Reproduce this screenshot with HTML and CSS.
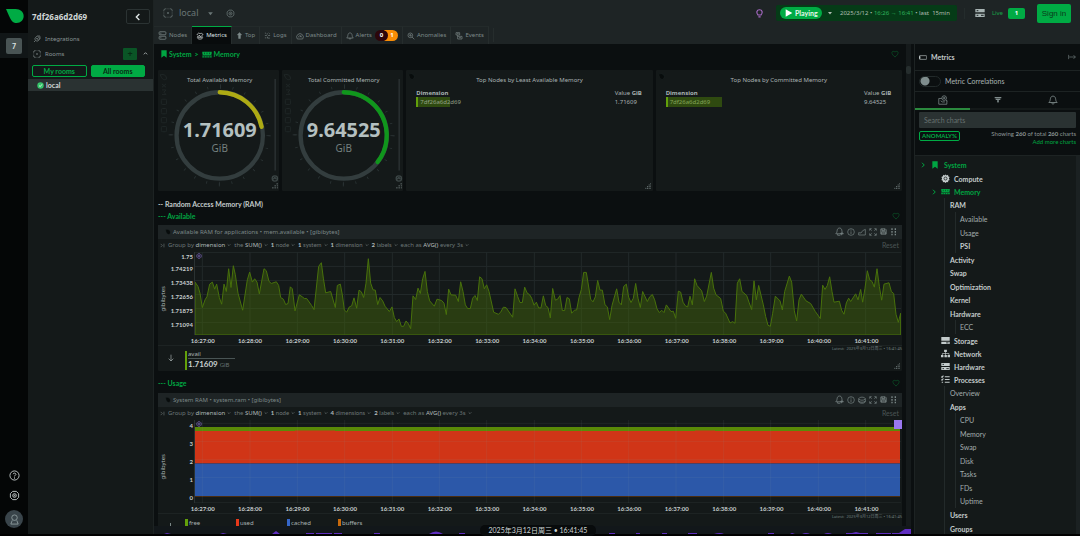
FILE: index.html
```html
<!DOCTYPE html>
<html lang="en">
<head>
<meta charset="utf-8">
<title>Metrics</title>
<link rel="stylesheet" href="styles.css">
</head>
<body>
<svg class="defs" aria-hidden="true">
  <symbol id="space" viewBox="0 0 24 24"><path d="M8 2H6a4 4 0 0 0-4 4v2M16 2h2a4 4 0 0 1 4 4v2M8 22H6a4 4 0 0 1-4-4v-2M16 22h2a4 4 0 0 0 4-4v-2M2 11v2M22 11v2M11 2h2M11 22h2"/><circle cx="12" cy="12" r="1.5"/></symbol>
  <symbol id="gear" viewBox="0 0 24 24"><path d="M8 3h8l5 5v8l-5 5H8l-5-5V8z"/><circle cx="12" cy="12" r="4"/><circle cx="12" cy="12" r="1"/></symbol>
  <symbol id="plug" viewBox="0 0 24 24"><path d="M8 7l5-4 8 8-4 5c-3 3-6 3-9 0S5 10 8 7zM8 16l-5 5M14 3l7 0M21 4v7M9 11h6v5"/></symbol>
  <symbol id="nodes" viewBox="0 0 24 24"><rect x="3" y="2" width="18" height="8" rx="2"/><rect x="3" y="14" width="18" height="8" rx="2"/><path d="M6 6h3M6 18h3"/></symbol>
  <symbol id="metrics" viewBox="0 0 24 24"><path d="M3 9c2-7 8-7 9-3 2-4 9-2 9 3M3 13h5l2-4 3 6 2-3h6M4 17c2 6 14 6 16 0z"/></symbol>
  <symbol id="top" viewBox="0 0 24 24"><path d="M12 2l7 8h-4v12H9V10H5z" fill="currentColor"/></symbol>
  <symbol id="logs" viewBox="0 0 24 24"><path d="M3 4h4M11 4v5M16 3l4 4M3 12h7M14 12h7M3 20h5M12 16v5h8"/></symbol>
  <symbol id="dash" viewBox="0 0 24 24"><path d="M4 21a10 10 0 1 1 16 0zM7 16c0-6 10-6 10 0M12 16l3-5"/></symbol>
  <symbol id="bell" viewBox="0 0 24 24"><path d="M2 18c4-3 3-7 4-10 1-7 11-7 12 0 1 3 0 7 4 10zM9 18c0 5 6 5 6 0"/></symbol>
  <symbol id="bellplus" viewBox="0 0 24 24"><path d="M2 18c4-3 3-7 4-10 1-7 11-7 12 0 1 3 0 7 4 10zM7 18v4h7M17 14v8M13 18h9"/></symbol>
  <symbol id="anomaly" viewBox="0 0 24 24"><circle cx="10" cy="10" r="7"/><path d="M15 15l7 7M6 10h2l2-3 1 6 2-3h1"/></symbol>
  <symbol id="events" viewBox="0 0 24 24"><path d="M3 2h11v7H3zM8 9v12h13v-8H8M12 17h6M6 5h5"/></symbol>
  <symbol id="bookmark" viewBox="0 0 24 24"><path d="M4 1h16v22l-8-6-8 6z" fill="currentColor" stroke="none"/></symbol>
  <symbol id="memory" viewBox="0 0 36 24"><path d="M1 2h34v6l-2 3 2 3v2H1v-2l2-3-2-3zM1 18h34v5H1z" fill="currentColor" stroke="none"/><path d="M9 5v6M18 5v6M27 5v6M9 18v6M18 18v6M27 18v6" stroke="#0d1a13" stroke-width="2"/></symbol>
  <symbol id="heart" viewBox="0 0 24 24"><path d="M12 21C-4 9 4 0 12 6c8-6 16 3 0 15z"/></symbol>
  <symbol id="bulb" viewBox="0 0 24 24"><path d="M8 16C2 10 5 2 12 2s10 8 4 14zM9 21h6" stroke-width="3"/></symbol>
  <symbol id="caret" viewBox="0 0 24 24"><path d="M4 8h16l-8 10z" fill="currentColor" stroke="none"/></symbol>
  <symbol id="chev" viewBox="0 0 24 24"><path d="M4 8l8 8 8-8" stroke-width="4"/></symbol>
  <symbol id="chevr" viewBox="0 0 24 24"><path d="M8 3l9 9-9 9" stroke-width="4"/></symbol>
  <symbol id="chevl" viewBox="0 0 24 24"><path d="M16 3l-9 9 9 9" stroke-width="4"/></symbol>
  <symbol id="server" viewBox="0 0 30 26"><path d="M1 1h28v10H1zM1 15h28v10H1z" fill="currentColor" stroke="none"/><path d="M5 6h5M5 20h5M18 20h8" stroke="#1e2526" stroke-width="3"/></symbol>
  <symbol id="disk" viewBox="0 0 30 26"><path d="M1 1h28v13H1zM1 17h28v8H1z" fill="currentColor" stroke="none"/><path d="M17 21h8" stroke="#1e2526" stroke-width="3"/></symbol>
  <symbol id="info" viewBox="0 0 24 24"><circle cx="12" cy="12" r="10"/><path d="M12 10v8M12 5v3"/></symbol>
  <symbol id="area" viewBox="0 0 24 24"><path d="M2 21v-7l7 1 5-7 8-4v17z"/></symbol>
  <symbol id="stack" viewBox="0 0 24 24"><path d="M2 8c3-6 17-6 20 0v10c-3 5-17 5-20 0zM2 9c6 5 14 5 20 0M2 15c6 5 14 5 20 0"/></symbol>
  <symbol id="expand" viewBox="0 0 24 24"><path d="M2 8V2h6M16 2h6v6M22 16v6h-6M8 22H2v-6M3 3l5 5M21 3l-5 5M21 21l-5-5M3 21l5-5"/></symbol>
  <symbol id="save" viewBox="0 0 24 24"><path d="M3 3h15l3 3v15H3zM7 3v6h9V3M6 21v-8h12v8M9 17h6" stroke-width="3"/></symbol>
  <symbol id="drag" viewBox="0 0 24 24"><path d="M6 1v5M16 1v5M6 9v5M16 9v5M6 17v5M16 17v5" stroke-width="4"/></symbol>
  <symbol id="grip" viewBox="0 0 18 18"><path d="M1 16h3M6 16h3M11 16h3M16 16h2M6 11h3M11 11h3M16 11h2M11 6h3M16 6h2M16 1h2" stroke-width="3"/></symbol>
  <symbol id="drop" viewBox="0 0 24 24"><path d="M3 3c12-3 18 3 18 10s-4 8-8 8C6 20 4 12 3 3z" fill="#080c0c" stroke="#283031"/></symbol>
  <symbol id="down" viewBox="0 0 24 24"><path d="M12 2v19M5 14l7 7 7-7"/></symbol>
  <symbol id="group" viewBox="0 0 24 24"><path d="M3 4l8 8-8 8M19 3v18" stroke-width="3"/></symbol>
  <symbol id="chip" viewBox="0 0 24 24"><path d="M6 2l3 2 3-3 3 3 4-2 0 4 4 2-2 4 2 4-4 2v4l-4-1-3 3-3-3-4 1v-4l-4-2 2-4-2-4 4-2z" fill="currentColor" stroke="none"/><circle cx="12" cy="12" r="4" stroke="#14191a"/></symbol>
  <symbol id="network" viewBox="0 0 26 24"><path d="M9 1h8v7H9zM0 16h7v7H0zM10 16h7v7h-7zM19 16h7v7h-7z" fill="currentColor" stroke="none"/><path d="M13 8v8M4 16v-4h19v4"/></symbol>
  <symbol id="tasks" viewBox="0 0 26 24"><path d="M1 4l2 2 4-5M1 12l2 2 4-5M11 4h14M11 12h14M11 20h14M2 20h4" stroke-width="3"/></symbol>
  <symbol id="folder" viewBox="0 0 26 26"><path d="M2 9v15h21V14M2 9h8M7 15l4 3h7"/><circle cx="16" cy="8" r="6"/><path d="M16 5v6M13 8h6M21 13l3 3"/></symbol>
  <symbol id="filter" viewBox="0 0 24 24"><path d="M2 5h20M5 10h14M9 15h6M11 19h2" stroke-width="4"/></symbol>
  <symbol id="out" viewBox="0 0 26 24"><path d="M2 5v14M4 12h20M18 6l6 6-6 6"/></symbol>
  <symbol id="panel" viewBox="0 0 26 16"><rect x="1" y="2" width="24" height="12" rx="2"/><path d="M2 4v8" stroke-width="5"/></symbol>
</svg>

<div class="app">
  <nav class="rail">
    <svg class="logo" viewBox="0 0 54 42"><path d="M0 0h29c14 0 24 9 24 21s-9 21-21 21h-4C15 42 8 16 0 0z" fill="#00ab44"/></svg>
    <div class="rail-space"><button class="space-tile">7</button></div>
    <div class="rail-foot">
      <svg class="ic i11" viewBox="0 0 24 24"><circle cx="12" cy="12" r="10"/><path d="M9 9c1-4 7-2 6 1-1 2-3 2-3 4M12 16v3"/></svg>
      <svg class="ic i11"><use href="#gear"/></svg>
      <span class="user"><svg class="ic i11" viewBox="0 0 24 24"><circle cx="12" cy="8" r="6"/><path d="M7 14l-3 8h16l-3-8"/></svg></span>
    </div>
  </nav>

  <aside class="rooms">
    <div class="rooms-head"><h1>7df26a6d2d69</h1><button class="collapse" aria-label="Collapse"><svg class="ic i8"><use href="#chevl"/></svg></button></div>
    <a class="rooms-link" href="#"><svg class="ic i8"><use href="#plug"/></svg>Integrations</a>
    <div class="rooms-link rooms-row"><svg class="ic i8"><use href="#space"/></svg><span>Rooms</span><button class="add" aria-label="Add room">+</button><svg class="ic i5 up"><use href="#chev"/></svg></div>
    <div class="room-tabs"><button>My rooms</button><button class="on">All rooms</button></div>
    <a class="room" href="#"><svg class="i7" viewBox="0 0 24 24"><circle cx="12" cy="12" r="11" fill="#35c46a"/><path d="M7 12l4 4 6-8" fill="none" stroke="#e6f5ea" stroke-width="3"/></svg>local</a>
  </aside>

  <div class="main">
    <header class="topbar">
      <svg class="ic i10"><use href="#space"/></svg><span class="crumb">local</span><svg class="ic i7"><use href="#caret"/></svg><svg class="ic i9 top-gear"><use href="#gear"/></svg>
      <svg class="ic i9 bulb"><use href="#bulb"/></svg>
      <div class="play">
        <button class="pill"><svg class="i8" viewBox="0 0 24 24"><path d="M2 1l20 11L2 23z" fill="#fff"/></svg>Playing</button>
        <svg class="ic i6"><use href="#caret"/></svg>
        <span class="range">2025/3/12 • <b>16:26</b> <b>→</b> <b>16:41</b> • last &nbsp;15min</span>
      </div>
      <div class="live"><svg class="ic srv"><use href="#server"/></svg><span>Live</span><b class="count">1</b></div>
      <button class="signin">Sign in</button>
    </header>
    <nav class="tabs">
      <a href="#"><svg class="ic i9"><use href="#nodes"/></svg>Nodes</a>
      <a href="#" class="on"><svg class="ic i8"><use href="#metrics"/></svg>Metrics</a>
      <a href="#"><svg class="ic i7"><use href="#top"/></svg>Top</a>
      <a href="#"><svg class="ic i7"><use href="#logs"/></svg>Logs</a>
      <a href="#"><svg class="ic i8"><use href="#dash"/></svg>Dashboard</a>
      <a href="#"><svg class="ic i8"><use href="#bell"/></svg>Alerts<span class="alerts"><b>0</b><b>1</b></span></a>
      <a href="#"><svg class="ic i8"><use href="#anomaly"/></svg>Anomalies</a>
      <a href="#"><svg class="ic i8"><use href="#events"/></svg>Events</a>
      <i class="tab-end"></i>
    </nav>

    <div class="work">
      <main class="content">
        <div class="scroll">
          <div class="path"><svg class="ic i8"><use href="#bookmark"/></svg><b>System</b><b>&gt;</b><svg class="ic mem"><use href="#memory"/></svg><b>Memory</b><svg class="ic i8 fav"><use href="#heart"/></svg></div>

          <section class="cards">
            <article class="card gauge">
              <svg viewBox="0 0 365 363" role="img" aria-label="Total Available Memory">
                <text class="g-title" x="186" y="36">Total Available Memory</text>
                <g class="wm"><path d="M7 14c12-2 20 3 18 14-8 4-15-2-18-14z"/><path d="M12 42l12 10M24 42L12 52M12 60h12l-6 7 6 7H12"/><rect x="10" y="88" width="16" height="16" rx="4"/><rect x="10" y="116" width="16" height="16" rx="4"/><rect x="10" y="143" width="16" height="16" rx="4"/><rect x="10" y="170" width="16" height="16" rx="4"/></g>
                <circle class="ticks" cx="186" cy="197" r="147" pathLength="24"/><circle class="major" cx="186" cy="197" r="147" pathLength="4"/>
                <circle class="ring" cx="186" cy="197" r="130"/><path class="arc" stroke="#aeab14" d="M186 67A130 130 0 0 1 312 171"/>
                <text class="g-num" x="186" y="201">1.71609</text><text class="g-unit" x="186" y="247">GiB</text>
                <path class="side" d="M353 27v276"/><circle cx="352" cy="327" r="8" class="knob"/><path class="knob" d="M347 329l5-5 5 5"/>
                <path class="dots" d="M344 355h17M351 349h10M357 343h4"/>
              </svg>
            </article>
            <article class="card gauge">
              <svg viewBox="0 0 365 363" role="img" aria-label="Total Committed Memory">
                <text class="g-title" x="186" y="36">Total Committed Memory</text>
                <g class="wm"><path d="M7 14c12-2 20 3 18 14-8 4-15-2-18-14z"/><path d="M12 42l12 10M24 42L12 52M12 60h12l-6 7 6 7H12"/><rect x="10" y="88" width="16" height="16" rx="4"/><rect x="10" y="116" width="16" height="16" rx="4"/><rect x="10" y="143" width="16" height="16" rx="4"/><rect x="10" y="170" width="16" height="16" rx="4"/></g>
                <circle class="ticks" cx="186" cy="197" r="147" pathLength="24"/><circle class="major" cx="186" cy="197" r="147" pathLength="4"/>
                <circle class="ring" cx="186" cy="197" r="130"/><path class="arc" stroke="#10961c" d="M186 67A130 130 0 0 1 288 277"/>
                <text class="g-num" x="186" y="201">9.64525</text><text class="g-unit" x="186" y="247">GiB</text>
                <path class="side" d="M353 27v276"/><circle cx="352" cy="327" r="8" class="knob"/><path class="knob" d="M347 329l5-5 5 5"/>
                <path class="dots" d="M344 355h17M351 349h10M357 343h4"/>
              </svg>
            </article>
            <article class="card topn">
              <svg class="i7 mark"><use href="#drop"/></svg>
              <h2>Top Nodes by Least Available Memory</h2>
              <table><thead><tr><th>Dimension</th><th class="val"><span>Value</span> GiB</th></tr></thead>
              <tbody><tr><td><span class="bar short">7df26a6d2d69</span></td><td class="val">1.71609</td></tr></tbody></table>
              <svg class="ic i6 grip"><use href="#grip"/></svg>
            </article>
            <article class="card topn">
              <svg class="i7 mark"><use href="#drop"/></svg>
              <h2>Top Nodes by Committed Memory</h2>
              <table><thead><tr><th>Dimension</th><th class="val"><span>Value</span> GiB</th></tr></thead>
              <tbody><tr><td><span class="bar">7df26a6d2d69</span></td><td class="val">9.64525</td></tr></tbody></table>
              <svg class="ic i6 grip"><use href="#grip"/></svg>
            </article>
          </section>

          <h2 class="sec">-- Random Access Memory (RAM)</h2>
          <h3 class="sub">--- Available<svg class="ic i8 fav"><use href="#heart"/></svg></h3>

          <article class="card chart">
            <header class="c-head"><svg class="i6"><use href="#drop"/></svg><span>Available RAM for applications • mem.available • [gibibytes]</span>
              <span class="c-tools"><svg class="ic i9"><use href="#bellplus"/></svg><svg class="ic i8"><use href="#info"/></svg><svg class="ic i8"><use href="#area"/></svg><svg class="ic i8"><use href="#expand"/></svg><svg class="ic i7"><use href="#save"/></svg><svg class="ic i8"><use href="#drag"/></svg></span></header>
            <div class="c-bar"><svg class="ic i5"><use href="#group"/></svg><span class="q">Group by <b>dimension</b><svg class="ic i4"><use href="#chev"/></svg></span><span class="q">the <b>SUM()</b><svg class="ic i4"><use href="#chev"/></svg></span><span class="q s"><b>1</b> node<svg class="ic i4"><use href="#chev"/></svg></span><span class="q s"><b>1</b> system<svg class="ic i4"><use href="#chev"/></svg></span><span class="q s"><b>1</b> dimension<svg class="ic i4"><use href="#chev"/></svg></span><span class="q s"><b>2</b> labels<svg class="ic i4"><use href="#chev"/></svg></span><span class="q">each as <b>AVG()</b> every 3s<svg class="ic i4"><use href="#chev"/></svg></span><button class="reset">Reset</button></div>
            <div class="c-plot">
              <div class="unit"><span>gibibytes</span></div>
              <div class="yax six"><span>1.75</span><span>1.74219</span><span>1.73438</span><span>1.72656</span><span>1.71875</span><span>1.71094</span></div>
              <div class="plot">
                <svg class="series" viewBox="0 0 2118 248" preserveAspectRatio="none">
                  <path class="grid" d="M0 1H2118M0 43H2118M0 85H2118M0 127H2118M0 169H2118M0 211H2118M22 0V248M165 0V248M307 0V248M449 0V248M592 0V248M733 0V248M875 0V248M1018 0V248M1159 0V248M1301 0V248M1443 0V248M1586 0V248M1727 0V248M1870 0V248M2012 0V248"/>
                  <path class="avail" d="M0 248V90L9 103 15 123 22 166 30 143 36 133 44 96 52 90 59 111 65 96 73 136 80 156 87 96 94 118 101 50 108 106 115 41 121 68 129 123 143 174 157 83 164 60 172 90 179 80 186 90 193 125 207 50 214 56 222 88 229 94 244 89 251 100 257 136 265 141 272 157 279 154 286 104 292 110 300 176 313 128 322 134 328 139 335 139 350 160 357 172 371 43 379 32 385 78 392 122 407 118 421 166 427 100 436 96 442 128 448 173 455 180 463 164 470 161 477 137 485 168 492 114 499 119 506 136 513 93 520 20 527 93 534 113 541 114 548 157 555 136 563 146 570 162 583 178 591 164 598 196 605 208 612 200 619 222 626 222 633 206 640 214 647 229 654 131 662 142 669 108 676 124 683 80 690 58 697 118 704 146 718 162 726 141 740 145 747 153 754 187 761 111 768 128 782 129 790 148 797 89 804 118 811 158 818 169 826 169 833 138 840 130 847 145 854 74 861 80 868 110 875 98 882 118 896 180 910 186 917 180 925 165 933 166 953 195 960 110 968 133 975 151 982 151 989 105 996 122 1004 128 1010 138 1017 159 1024 150 1031 167 1038 167 1045 131 1052 160 1059 166 1066 197 1073 109 1081 144 1088 141 1095 130 1102 175 1109 175 1116 136 1123 140 1130 183 1138 174 1145 173 1152 136 1159 112 1166 61 1174 61 1187 141 1194 149 1201 134 1208 85 1215 114 1222 114 1230 158 1237 164 1244 202 1251 160 1265 110 1272 150 1279 158 1286 103 1294 96 1301 135 1308 151 1315 138 1322 94 1329 138 1336 166 1343 118 1357 148 1364 134 1372 127 1379 143 1386 170 1393 181 1400 174 1407 181 1414 158 1428 178 1435 177 1442 198 1450 117 1457 120 1464 150 1471 161 1478 164 1485 132 1492 158 1499 80 1506 100 1520 116 1528 148 1535 132 1549 61 1556 108 1563 128 1577 139 1585 177 1592 183 1605 212 1613 208 1620 213 1627 93 1634 80 1641 118 1655 130 1662 150 1670 172 1677 86 1684 143 1691 100 1705 158 1712 193 1719 219 1726 222 1733 183 1741 132 1755 146 1762 173 1769 118 1783 72 1790 90 1798 176 1805 206 1812 143 1819 126 1833 146 1847 154 1861 178 1876 199 1883 99 1890 112 1897 100 1904 74 1911 118 1917 150 1933 147 1940 174 1947 186 1954 152 1961 138 1967 148 1982 125 1989 143 1997 112 2003 150 2010 108 2017 56 2024 83 2031 88 2038 105 2046 50 2053 103 2060 144 2067 96 2082 92 2089 118 2096 124 2103 186 2110 210 2117 183V248z"/>
                </svg>
                <svg class="ic i6 ai"><use href="#gear"/></svg>
                <div class="xax"><span>16:27:00</span><span>16:28:00</span><span>16:29:00</span><span>16:30:00</span><span>16:31:00</span><span>16:32:00</span><span>16:33:00</span><span>16:34:00</span><span>16:35:00</span><span>16:36:00</span><span>16:37:00</span><span>16:38:00</span><span>16:39:00</span><span>16:40:00</span><span>16:41:00</span></div>
              </div>
            </div>
            <div class="latest">Latest: &nbsp;2025年3月12日周三 • 16:41:45</div>
            <div class="c-foot"><svg class="ic i8"><use href="#down"/></svg><div class="dim"><span>avail</span><strong>1.71609 <small>GiB</small></strong></div><svg class="ic i6 grip"><use href="#grip"/></svg></div>
          </article>

          <h3 class="sub usage">--- Usage<svg class="ic i8 fav"><use href="#heart"/></svg></h3>

          <article class="card chart">
            <header class="c-head"><svg class="i6"><use href="#drop"/></svg><span>System RAM • system.ram • [gibibytes]</span>
              <span class="c-tools"><svg class="ic i9"><use href="#bellplus"/></svg><svg class="ic i8"><use href="#info"/></svg><svg class="ic i8"><use href="#stack"/></svg><svg class="ic i8"><use href="#expand"/></svg><svg class="ic i7"><use href="#save"/></svg><svg class="ic i8"><use href="#drag"/></svg></span></header>
            <div class="c-bar"><svg class="ic i5"><use href="#group"/></svg><span class="q">Group by <b>dimension</b><svg class="ic i4"><use href="#chev"/></svg></span><span class="q">the <b>SUM()</b><svg class="ic i4"><use href="#chev"/></svg></span><span class="q s"><b>1</b> node<svg class="ic i4"><use href="#chev"/></svg></span><span class="q s"><b>1</b> system<svg class="ic i4"><use href="#chev"/></svg></span><span class="q s"><b>4</b> dimensions<svg class="ic i4"><use href="#chev"/></svg></span><span class="q s"><b>2</b> labels<svg class="ic i4"><use href="#chev"/></svg></span><span class="q">each as <b>AVG()</b> every 3s<svg class="ic i4"><use href="#chev"/></svg></span><button class="reset">Reset</button></div>
            <div class="c-plot">
              <div class="unit"><span>gibibytes</span></div>
              <div class="yax five"><span>4</span><span>3</span><span>2</span><span>1</span><span>0</span></div>
              <div class="plot">
                <svg class="series" viewBox="0 0 2118 248" preserveAspectRatio="none">
                  <path d="M0 21H2115V34H0z" fill="#5a8a08"/><path d="M0 33H300V31H420V33H900V32H1100V33H1500V31H1560V33H2115V130H0z" fill="#d03517"/><path d="M0 130H2115V227H0z" fill="#2c58a9"/><path d="M0 227H2115V230H0z" fill="#4a2c10"/>
                  <path class="grid soft" d="M0 10H2118M0 64H2118M0 118H2118M0 172H2118M0 247H2118M22 0V248M165 0V248M307 0V248M449 0V248M592 0V248M733 0V248M875 0V248M1018 0V248M1159 0V248M1301 0V248M1443 0V248M1586 0V248M1727 0V248M1870 0V248M2012 0V248"/>
                </svg>
                <svg class="ic i6 ai"><use href="#gear"/></svg><i class="flag"></i>
                <div class="xax"><span>16:27:00</span><span>16:28:00</span><span>16:29:00</span><span>16:30:00</span><span>16:31:00</span><span>16:32:00</span><span>16:33:00</span><span>16:34:00</span><span>16:35:00</span><span>16:36:00</span><span>16:37:00</span><span>16:38:00</span><span>16:39:00</span><span>16:40:00</span><span>16:41:00</span></div>
              </div>
            </div>
            <div class="latest">Latest: &nbsp;2025年3月12日周三 • 16:41:45</div>
            <div class="legend"><i class="tick"></i><span class="free">free</span><span class="used">used</span><span class="cached">cached</span><span class="buffers">buffers</span></div>
          </article>
        </div>
        <div class="track"><i></i></div>
        <div class="strip">
          <svg viewBox="0 0 757 8" preserveAspectRatio="none"><path fill="#5f2ec0" d="M10 8l3-1 4 1zM66 8l3-1 4 1zM118 8l4-3 4 3zM152 8v-1h8v1zM162 8v-1h16v1zM180 8v-1h8v1zM220 8v-1h6v1zM275 8q7-5 14 0zM305 8v-1h6v1zM435 8v-1h5v1zM455 8v-1h6v1zM482 8v-1h4v1zM508 8v-1h5v1zM534 8v-1h9v1zM560 8q6-2 10 0zM614 8v-1h6v1zM636 8l2-1 3 1zM648 8q4-2 8 0zM670 8q4-2 8 0zM692 8v-1h6l4-1 4 1h8v1zM722 8v-1h15v1zM738 8v-1h7l6-4h6v5z"/></svg>
          <time>2025年3月12日周三 • 16:41:45</time>
        </div>
      </main>

      <aside class="panel">
        <div class="p-head"><svg class="ic pan"><use href="#panel"/></svg><b>Metrics</b><svg class="ic i8 end"><use href="#out"/></svg></div>
        <label class="p-corr"><input type="checkbox"><span>Metric Correlations</span></label>
        <div class="p-tabs"><button class="on" aria-label="Charts"><svg class="ic i10"><use href="#folder"/></svg></button><button aria-label="Filters"><svg class="ic i8"><use href="#filter"/></svg></button><button aria-label="Alerts"><svg class="ic i10"><use href="#bell"/></svg></button></div>
        <div class="p-search"><input type="text" placeholder="Search charts" aria-label="Search charts">
          <div class="p-info"><button>ANOMALY%</button><div><p>Showing <b>260</b> of total <b>260</b> charts</p><a href="#">Add more charts</a></div></div></div>
        <div class="tree">
          <a href="#" class="l0 green"><svg class="ic i6"><use href="#chevr"/></svg><svg class="ic i8"><use href="#bookmark"/></svg>System</a>
          <a href="#" class="l1"><svg class="ic i9"><use href="#chip"/></svg>Compute</a>
          <a href="#" class="l1 green open"><svg class="ic i6"><use href="#chevr"/></svg><svg class="ic i9"><use href="#memory"/></svg>Memory</a>
          <div class="kids"><a href="#">RAM</a>
            <div class="kids"><a href="#" class="leaf">Available</a><a href="#" class="leaf">Usage</a><a href="#">PSI</a></div>
            <a href="#">Activity</a><a href="#">Swap</a><a href="#">Optimization</a><a href="#">Kernel</a><a href="#">Hardware</a>
            <div class="kids"><a href="#" class="leaf">ECC</a></div></div>
          <a href="#" class="l1"><svg class="ic i9"><use href="#disk"/></svg>Storage</a>
          <a href="#" class="l1"><svg class="ic i9"><use href="#network"/></svg>Network</a>
          <a href="#" class="l1"><svg class="ic i9"><use href="#server"/></svg>Hardware</a>
          <a href="#" class="l1"><svg class="ic i9"><use href="#tasks"/></svg>Processes</a>
          <div class="kids"><a href="#" class="leaf">Overview</a><a href="#">Apps</a>
            <div class="kids"><a href="#" class="leaf">CPU</a><a href="#" class="leaf">Memory</a><a href="#" class="leaf">Swap</a><a href="#" class="leaf">Disk</a><a href="#" class="leaf">Tasks</a><a href="#" class="leaf">FDs</a><a href="#" class="leaf">Uptime</a></div>
            <a href="#">Users</a><a href="#">Groups</a></div>
        </div>
      </aside>
    </div>
  </div>
</div>
</body>
</html>
```
FILE: styles.css
```css
* { box-sizing: border-box; margin: 0; }
body { background: #000; color: #a9b3b3; font: 7px/10px Lato, "Noto Sans", "Noto Sans CJK SC", sans-serif; }
a { color: inherit; text-decoration: none; }
button { font: inherit; color: inherit; background: none; border: 0; padding: 0; }
.defs { position: absolute; width: 0; height: 0; }
.ic { fill: none; stroke: currentColor; stroke-width: 2; flex: none; }
.i4 { width: 4px; height: 4px; }
.i5 { width: 5px; height: 5px; }
.i6 { width: 6px; height: 6px; }
.i7 { width: 7px; height: 7px; flex: none; }
.i8 { width: 8px; height: 8px; }
.i9 { width: 9px; height: 9px; }
.i10 { width: 10px; height: 10px; }
.i11 { width: 11px; height: 11px; }

.app { display: grid; grid-template-columns: 28px 126px minmax(0, 1fr); height: 100vh; padding-bottom: 2px; overflow: hidden; }

.rail { background: #040606; display: flex; flex-direction: column; align-items: center; padding-top: 9px; }
.logo { width: 18px; height: 14px; margin-left: 1px; }
.rail-space { width: 100%; height: 25px; margin-top: 10px; background: #111617; display: grid; place-items: center; }
.space-tile { width: 16px; height: 16px; background: #495454; border-radius: 2px; color: #dfe5e5; font-weight: 700; }
.rail-foot { margin-top: auto; display: flex; flex-direction: column; align-items: center; gap: 9px; color: #c3caca; padding-bottom: 6px; }
.user { width: 18px; height: 18px; border-radius: 9px; background: #39444a; display: grid; place-items: center; color: #8c9a9c; }

.rooms { background: #141919; border-right: 1px solid #1d2323; }
.rooms-head { display: flex; justify-content: space-between; align-items: center; padding: 9px 3px 8px 4px; }
.rooms h1 { font: 700 8px/14px "Noto Sans", sans-serif; color: #cfd6d6; }
.collapse { width: 24px; height: 15px; border: 1px solid #2b3333; border-radius: 2px; color: #e2e8e8; display: grid; place-items: center; }
.rooms-link { display: flex; align-items: center; gap: 4px; height: 13px; padding: 0 5px; color: #8b9696; font: 6px/10px "Noto Sans", sans-serif; }
.rooms-row { margin: 2px 0 3px; }
.add { margin-left: auto; margin-right: 2px; width: 14px; height: 12px; background: #0a5526; color: #062c14; border-radius: 1px; font-weight: 700; font-size: 9px; }
.up { transform: rotate(180deg); color: #b4bebe; }
.room-tabs { display: grid; grid-template-columns: 1fr 1fr; gap: 4px; padding: 2px 8px 2px 4px; }
.room-tabs button { height: 12px; border: 1px solid #00ab44; border-radius: 2px; color: #00ab44; font-weight: 700; line-height: 10px; }
.room-tabs .on { background: #00ab44; color: #0a2a15; }
.room { display: flex; align-items: center; gap: 2px; height: 12px; padding-left: 9px; background: #2a3232; color: #d5dbdb; font-weight: 700; }

.main { display: flex; flex-direction: column; min-width: 0; min-height: 0; background: #0b0f10; }
.topbar { display: flex; align-items: center; height: 26px; background: #1e2425; color: #6a7676; padding: 0 9px 0 9px; }
.crumb { font: 9px/12px "Noto Sans", sans-serif; margin: 0 9px 0 6px; }
.top-gear { margin-left: 12px; }
.bulb { margin-left: auto; color: #a96bc7; }
.play { display: flex; align-items: center; height: 16px; margin-left: 12px; padding: 0 7px 0 4px; background: #053b17; border-radius: 2px; color: #b0bcb3; }
.pill { display: flex; align-items: center; gap: 2px; width: 42px; height: 12px; padding-left: 5px; background: #00ab44; border-radius: 6px; color: #e8f7ec; font-weight: 700; }
.play .i6 { margin: 0 7px 0 5px; }
.range { font: 6px/10px "Noto Sans", sans-serif; }
.range b { font-weight: 400; color: #2fb35c; }
.live { display: flex; align-items: center; margin-left: 7px; padding-left: 10px; border-left: 1px solid #242c2c; color: #17a548; font: 6px/11px "Noto Sans", sans-serif; }
.srv { width: 10px; height: 10px; margin-right: 7px; color: #a7b3b3; }
.count { width: 17px; height: 11px; margin-left: 5px; background: #00ab44; border-radius: 2px; color: #fff; text-align: center; }
.signin { width: 34px; height: 19px; margin-left: 12px; background: #00ab44; border-radius: 2px; color: #0b3a1b; font: 8px/19px "Liberation Sans", sans-serif; }

.tabs { display: flex; height: 18px; background: #1e2425; color: #7d8989; font: 6px/17px "Noto Sans", sans-serif; }
.tabs a { display: flex; align-items: center; gap: 2px; padding: 0 4px; border-top: 1px solid #232a2a; border-right: 1px solid #262d2d; }
.tabs .on { background: #080b0c; border-top-color: #00ab44; color: #dfe5e5; }
.tab-end { width: 5px; height: 14px; margin-top: 2px; border-right: 1px solid #262d2d; }
.alerts { display: flex; line-height: 11px; margin-left: 1px; }
.alerts b { width: 13px; height: 11px; border-radius: 6px; background: #2c060b; color: #fff; text-align: center; z-index: 1; }
.alerts b + b { width: 14px; margin-left: -4px; padding-left: 2px; border-radius: 0 6px 6px 0; background: #f98d06; z-index: 0; }

.work { flex: 1; min-height: 0; display: grid; grid-template-columns: minmax(0, 1fr) 166px; }
.content { display: grid; grid-template-columns: minmax(0, 1fr) 5px; grid-template-rows: minmax(0, 1fr) 8px; padding-right: 3px; min-height: 0; }
.scroll { overflow: hidden; padding: 0 4px; }
.track { background: #151a1b; padding-top: 22px; }
.track i { display: block; height: 8px; border-radius: 2px; background: #262e2e; }
.path { display: flex; align-items: center; gap: 1px; height: 20px; margin-bottom: 6px; padding: 0 3px 0 2px; color: #00a542; }
.path b:nth-of-type(2) { margin: 0 2px; }
.mem { width: 10px; height: 7px; margin-right: 1px; }
.fav { margin-left: auto; color: #0b5c2a; }

.cards { display: grid; grid-template-columns: 61fr 61fr 124fr 124fr; gap: 3px; }
.card { background: #141919; border-radius: 1px; position: relative; }
.gauge svg { display: block; width: 100%; }
.gauge text { text-anchor: middle; }
.g-title { font: 18px "Noto Sans", sans-serif; fill: #aab4b4; }
.g-num { font: 700 60px "Noto Sans", sans-serif; fill: #b4c0c0; }
.g-unit { font: 30px "Noto Sans", sans-serif; fill: #74807f; }
.ring { fill: none; stroke: #333d3e; stroke-width: 13; }
.arc { fill: none; stroke-width: 13; stroke-linecap: round; }
.ticks, .major { fill: none; stroke: #2c3536; stroke-width: 8; stroke-dasharray: 0.06 0.94; }
.major { stroke-width: 14; stroke-dasharray: 0.01 0.99; }
.side { stroke: #272e2f; stroke-width: 5; }
.knob { fill: none; stroke: #3c4646; stroke-width: 4; }
.dots { stroke: #6c7777; stroke-width: 3; stroke-dasharray: 4 3; }
.wm { fill: none; stroke: #1f2626; stroke-width: 3; }
.mark { position: absolute; left: 2px; top: 3px; }
.grip { position: absolute; right: 2px; bottom: 2px; color: #6c7777; }
.topn { padding: 5px 10px 0; font: 6px/10px "Noto Sans", sans-serif; }
.topn h2 { font-weight: 400; font-size: 6px; text-align: center; }
.topn table { width: 100%; margin-top: 4px; border-collapse: collapse; }
.topn th, .topn td { padding: 0; text-align: left; line-height: 8px; }
.topn .val { width: 28px; white-space: nowrap; }
.topn th span { font-weight: 400; }
.bar { display: inline-block; line-height: 10px; padding-left: 2px; padding-right: 12px; border-left: 2px solid #62a00a; background: #2f4a10; color: #85a558; }
.bar.short { padding-right: 0; background: linear-gradient(90deg, #2f4a10 32px, transparent 32px); color: #93a086; }

.sec { font-size: 7px; line-height: 12px; margin-top: 7px; color: #c3cbcb; }
.sub { display: flex; align-items: center; height: 13px; padding-right: 2px; font-size: 7px; color: #00a542; margin-bottom: 2px; }
.sub.usage { height: 22px; margin: 0; padding-top: 2px; }

.chart { font: 6px/10px "Noto Sans", "Noto Sans CJK SC", sans-serif; }
.c-head { display: flex; align-items: center; height: 14px; padding: 0 4px 0 7px; gap: 2px; background: #1e2425; color: #7c8888; }
.c-tools { display: flex; align-items: center; gap: 3px; margin-left: auto; color: #7a8686; }
.c-bar { display: flex; align-items: center; height: 13px; padding: 0 3px 0 2px; gap: 3px; color: #6c7777; }
.q { display: flex; align-items: center; white-space: pre; }
.q .i4 { margin-left: 2px; }
.q b { font-weight: 400; color: #b3bcbc; }
.q.s { font-family: Lato, sans-serif; }
.q.s b { font-weight: 700; }
.reset { margin-left: auto; color: #4b5555; font: 7px/10px Lato, sans-serif; }
.c-plot { display: grid; grid-template-columns: 10px 26px minmax(0, 1fr); padding-right: 1px; border-bottom: 1px solid #1d2323; }
.unit { display: grid; place-items: center; padding-top: 2px; }
.unit span { writing-mode: vertical-rl; transform: rotate(180deg); line-height: 8px; }
.yax { display: grid; height: 83px; padding-right: 1px; text-align: right; font: 700 6px/8px Lato, sans-serif; color: #c6cdcd; }
.six { grid-template-rows: 10px; grid-auto-rows: 14px; align-items: center; }
.five { grid-auto-rows: 18px; padding-top: 2px; }
.plot { position: relative; }
.series { display: block; width: 100%; height: 83px; border-left: 1px solid #2a3232; }
.grid { fill: none; stroke: #22292a; vector-effect: non-scaling-stroke; }
.soft { stroke: rgba(140, 160, 160, 0.1); }
.avail { fill: rgba(72, 112, 8, 0.4); stroke: #48710b; vector-effect: non-scaling-stroke; }
.ai { position: absolute; left: 2px; top: 1px; color: #6b5aa0; stroke-width: 3; }
.flag { position: absolute; right: -1px; top: 0; width: 8px; height: 9px; background: #9a77f0; }
.xax { display: flex; height: 10px; margin: 0 11px 0 -15px; font: 700 6px/11px Lato, sans-serif; color: #c6cdcd; }
.xax span { flex: 1; text-align: center; }
.latest { text-align: right; font-size: 4px; line-height: 6px; height: 5px; color: #738080; }
.c-foot { display: flex; gap: 10px; padding: 0 0 1px 9px; }
.c-foot .i8 { margin-top: 3px; }
.dim { width: 50px; border-left: 2px solid #62a00a; padding-left: 1px; line-height: 7px; }
.dim span { display: block; border-bottom: 1px solid #495454; }
.dim strong { display: block; font: 700 8px/11px Lato, sans-serif; color: #c9d1d1; }
.dim small { font-size: 6px; font-weight: 400; color: #657070; }
.legend { display: flex; padding: 0 0 0 12px; }
.legend .tick { width: 1px; height: 4px; margin: 4px 14px 0 0; background: #7a8686; }
.legend span { width: 51px; height: 8px; line-height: 8px; padding-left: 1px; border-left: 3px solid #62a00a; }
.legend .used { border-color: #e8391a; }
.legend .cached { border-color: #3566c8; }
.legend .buffers { border-color: #c96a0c; }

.strip { grid-column: 1 / -1; position: relative; background: #12171a; }
.strip svg { display: block; width: 100%; height: 8px; }
.strip time { position: absolute; left: 43%; bottom: -2px; padding: 0 9px; line-height: 11px; border-radius: 5px; background: #080b0c; color: #cfd6d6; white-space: nowrap; }

.panel { display: flex; flex-direction: column; min-height: 0; border-left: 1px solid #1d2323; overflow: hidden; }
.p-head { display: flex; align-items: center; gap: 4px; height: 27px; padding: 0 4px; border-bottom: 1px solid #1d2323; color: #c3cbcb; flex: none; }
.pan { width: 8px; height: 5px; }
.end { margin-left: auto; color: #7a8686; }
.p-corr { display: flex; align-items: center; gap: 4px; height: 21px; padding: 0 4px; border-bottom: 1px solid #1d2323; flex: none; }
.p-corr input { appearance: none; width: 22px; height: 11px; margin: 0; border: 1px solid #222a2a; border-radius: 6px; background: radial-gradient(circle at 5px 4px, #7f8d8d 4px, transparent 5px); }
.p-tabs { display: grid; grid-template-columns: repeat(3, 1fr); height: 18px; flex: none; }
.p-tabs button { display: grid; place-items: center; border-bottom: 2px solid #141919; color: #7f8b8b; }
.p-tabs .on { border-color: #2b8a3e; }
.p-search { height: 46px; padding: 2px 4px; border-bottom: 1px solid #1d2323; flex: none; }
.p-search input { display: block; width: 100%; height: 16px; border: 0; border-radius: 1px; padding: 0 5px; background: #2a3232; color: #c3cbcb; font: inherit; }
.p-search input::placeholder { color: #66716f; opacity: 1; }
.p-info { display: flex; justify-content: space-between; align-items: flex-start; padding-top: 2px; font: 6px/8px Lato, sans-serif; text-align: right; color: #8b9696; }
.p-info button { margin-top: 1px; padding: 0 2px; border: 1px solid #00ab44; border-radius: 2px; color: #00ab44; font-weight: 700; }
.p-info a { color: #00a542; }
.tree { flex: 1; min-height: 0; overflow: hidden; padding: 2px 0 0 5px; background: linear-gradient(90deg, #141919 161px, #1b2122 161px); color: #c3cbcb; font-weight: 700; }
.tree a { display: flex; align-items: center; height: 13px; }
.tree a:nth-of-type(odd) { height: 14px; }
.tree .l1:nth-of-type(odd) { height: 13px; }
.tree > a { gap: 5px; }
.tree .l1 { padding-left: 21px; gap: 4px; }
.tree .open { padding-left: 11px; }
.tree .green { color: #00a542; }
.tree .leaf { font-weight: 400; color: #a3adad; }
.kids { margin-left: 24px; padding-left: 5px; border-left: 1px solid #232a2a; }
.kids .kids { margin-left: 5px; padding-left: 4px; }
```
